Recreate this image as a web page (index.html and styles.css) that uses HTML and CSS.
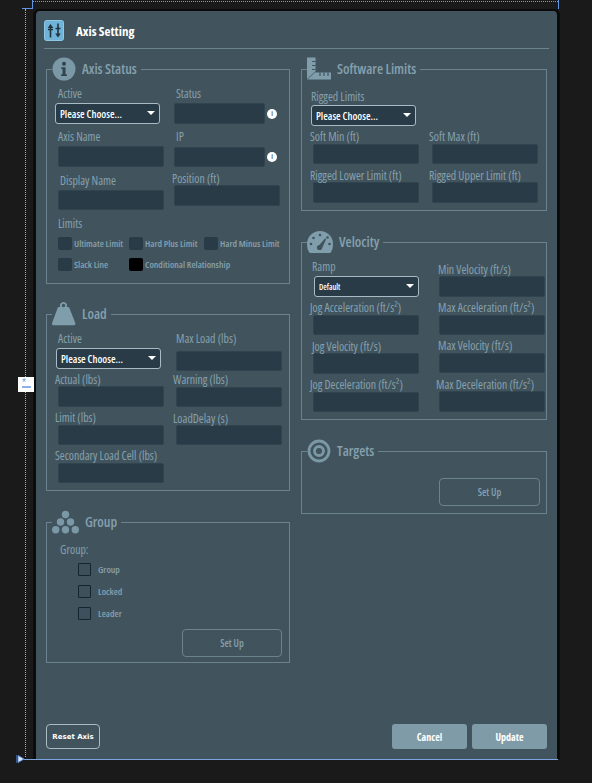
FILE: index.html
```html
<!DOCTYPE html>
<html lang="en">

<head>
    <meta charset="UTF-8">
    <meta name="viewport" content="width=device-width, initial-scale=1.0">
    <title>Axis Setting</title>
    <link rel="stylesheet" href="styles.css">
</head>

<body>

    <!-- Designer guides that lie over the page -->
    <div class="guide guide-dots-top"></div>
    <div class="guide guide-dots-left"></div>
    <div class="guide guide-corner-h"></div>
    <div class="guide guide-corner-v"></div>
    <div class="guide guide-right-v"></div>
    <div class="guide guide-bottom"></div>
    <svg class="guide guide-arrow" width="8" height="8" viewBox="0 0 8 8"><path d="M0 0v8M2 0.500v7L8 4z" fill="#dfe9fb" stroke="#5f93e6"/></svg>
    <div class="guide guide-tab"><span class="tab-star">*</span><span class="tab-bar"></span></div>

    <div class="panel">
        <header class="panel-head">
            <svg class="head-icon" width="20" height="21" viewBox="0 0 20 21">
                <rect x="0.500" y="0.500" width="19" height="20" rx="2" fill="#6fb3d8" stroke="#8fc8e6"/>
                <path d="M6.500 7v10.500M4 9.500h5M14 3.500V14M11.500 8.500h5" fill="none" stroke="#22343f" stroke-width="1.600"/>
                <path d="M6.500 4 9.300 8H3.700zM14 17.500 11.200 13.500h5.600z" fill="#22343f"/>
            </svg>
            <h1>Axis Setting</h1>
        </header>

        <div class="columns">
            <div class="column">

                <fieldset class="box box-status">
                    <legend class="box-title">
                        <svg width="24" height="24" viewBox="0 0 24 24">
                            <circle cx="12" cy="12" r="11.500" fill="#7b98a6"/>
                            <circle cx="12" cy="6.800" r="2" fill="#2f444f"/>
                            <path d="M9.300 10.200h4.200v7h1.400v1.800H9.200v-1.800h1.400v-5.200H9.300z" fill="#2f444f"/>
                        </svg>
                        <span>Axis Status</span>
                    </legend>
                    <div class="grid grid-status">
                        <div class="field">
                            <label class="in-3">Active</label>
                            <div class="select-wrap"><select class="select"><option>Please Choose...</option></select></div>
                        </div>
                        <div class="field">
                            <label class="in-4">Status</label>
                            <div class="with-info in-2">
                                <input class="input input-short" type="text">
                                <span class="info">i</span>
                            </div>
                        </div>
                        <div class="field">
                            <label class="in-3">Axis Name</label>
                            <input class="input in-3" type="text">
                        </div>
                        <div class="field">
                            <label class="in-4 gap-4">IP</label>
                            <div class="with-info in-2">
                                <input class="input input-short input-low" type="text">
                                <span class="info">i</span>
                            </div>
                        </div>
                        <div class="field down-2">
                            <label class="in-5">Display Name</label>
                            <input class="input input-low in-3" type="text">
                        </div>
                        <div class="field">
                            <label class="gap-0">Position (ft)</label>
                            <input class="input in-2" type="text">
                        </div>
                        <div class="limits">
                            <label class="in-3">Limits</label>
                            <div class="limit-row">
                                <div class="limit limit-a"><input class="limit-box" type="checkbox"><span>Ultimate Limit</span></div>
                                <div class="limit limit-b"><input class="limit-box" type="checkbox"><span>Hard Plus Limit</span></div>
                                <div class="limit"><input class="limit-box" type="checkbox"><span>Hard Minus Limit</span></div>
                            </div>
                            <div class="limit-row">
                                <div class="limit limit-a"><input class="limit-box" type="checkbox"><span>Slack Line</span></div>
                                <div class="limit"><input class="limit-box limit-black" type="checkbox"><span>Conditional Relationship</span></div>
                            </div>
                        </div>
                    </div>
                </fieldset>

                <fieldset class="box box-load">
                    <legend class="box-title">
                        <svg width="24" height="24" viewBox="0 0 24 24">
                            <path d="M11.500 0a3.500 3.500 0 0 1 3.200 5H16c.7 0 1.200.4 1.400 1L23.300 21c.4 1.300-.2 2.300-1.600 2.300H1.700C.3 23.300-.3 22.300.1 21L5.600 6c.2-.6.700-1 1.400-1h1.300A3.500 3.500 0 0 1 11.500 0zm0 1.800a1.700 1.700 0 0 0 0 3.400 1.700 1.700 0 0 0 0-3.400z" fill="#7f9dab"/>
                        </svg>
                        <span>Load</span>
                    </legend>
                    <div class="grid grid-load">
                        <div class="field">
                            <label class="in-3">Active</label>
                            <div class="select-wrap in-1"><select class="select"><option>Please Choose...</option></select></div>
                        </div>
                        <div class="field">
                            <label class="in-3 gap-6">Max Load (lbs)</label>
                            <input class="input input-low in-3" type="text">
                        </div>
                        <div class="field">
                            <label class="gap-0">Actual (lbs)</label>
                            <input class="input in-3" type="text">
                        </div>
                        <div class="field">
                            <label class="gap-1">Warning (lbs)</label>
                            <input class="input input-low in-3" type="text">
                        </div>
                        <div class="field">
                            <label class="gap-1">Limit (lbs)</label>
                            <input class="input input-low in-3" type="text">
                        </div>
                        <div class="field down-1">
                            <label class="gap-0">LoadDelay (s)</label>
                            <input class="input input-low in-3" type="text">
                        </div>
                        <div class="field field-wide">
                            <label class="gap-1">Secondary Load Cell (lbs)</label>
                            <input class="input input-low in-3" type="text">
                        </div>
                    </div>
                </fieldset>

                <fieldset class="box box-group">
                    <legend class="box-title">
                        <svg width="27" height="24" viewBox="0 0 27 24">
                            <circle cx="13.500" cy="4.500" r="3.700" fill="#7b98a6"/>
                            <circle cx="8.500" cy="12" r="3.700" fill="#7b98a6"/>
                            <circle cx="18.500" cy="12" r="3.700" fill="#7b98a6"/>
                            <circle cx="3.700" cy="19.800" r="3.700" fill="#7b98a6"/>
                            <circle cx="13.500" cy="19.800" r="3.700" fill="#7b98a6"/>
                            <circle cx="23.300" cy="19.800" r="3.700" fill="#7b98a6"/>
                        </svg>
                        <span>Group</span>
                    </legend>
                    <div class="group-body">
                        <label class="group-label">Group:</label>
                        <div class="check"><input class="check-box" type="checkbox"><span>Group</span></div>
                        <div class="check"><input class="check-box" type="checkbox"><span>Locked</span></div>
                        <div class="check"><input class="check-box" type="checkbox"><span>Leader</span></div>
                        <button class="setup setup-group" type="button">Set Up</button>
                    </div>
                </fieldset>

            </div>

            <div class="column">

                <fieldset class="box box-limits">
                    <legend class="box-title">
                        <svg width="24" height="24" viewBox="0 0 24 24">
                            <path d="M0 0.500H8.500V15.500H24V22.500H0z" fill="#7f9dab"/>
                            <path d="M0 22.500 8.500 14.500" stroke="#41545e" stroke-width="0.800" fill="none"/>
                            <path d="M8.500 4.500H5M8.500 8.500H5M8.500 12.500H5M13 15.500V19M17 15.500V19M21 15.500V19" stroke="#41545e" stroke-width="1.200" fill="none"/>
                        </svg>
                        <span>Software Limits</span>
                    </legend>
                    <div class="grid grid-limits">
                        <div class="field field-wide">
                            <label class="in-1 gap-2">Rigged Limits</label>
                            <div class="select-wrap in-1"><select class="select"><option>Please Choose...</option></select></div>
                        </div>
                        <div class="field">
                            <label class="gap-1">Soft Min (ft)</label>
                            <input class="input input-low in-3" type="text">
                        </div>
                        <div class="field">
                            <label class="gap-1">Soft Max (ft)</label>
                            <input class="input input-low in-3" type="text">
                        </div>
                        <div class="field">
                            <label class="gap-0">Rigged Lower Limit (ft)</label>
                            <input class="input in-3" type="text">
                        </div>
                        <div class="field">
                            <label class="gap-0">Rigged Upper Limit (ft)</label>
                            <input class="input in-3" type="text">
                        </div>
                    </div>
                </fieldset>

                <fieldset class="box box-velocity">
                    <legend class="box-title">
                        <svg width="26" height="24" viewBox="0 0 26 24">
                            <path d="M13 1C6 1 0 6.500 0 14c0 3 .6 5.500 1.700 7.500.6 1 1.300 1.500 2.300 1.500h18c1 0 1.700-.5 2.300-1.500C25.400 19.500 26 17 26 14 26 6.500 20 1 13 1z" fill="#7f9dab"/>
                            <g fill="#41545e">
                                <circle cx="13" cy="5" r="1.300"/>
                                <circle cx="6.500" cy="8" r="1.300"/>
                                <circle cx="4" cy="14" r="1.300"/>
                                <circle cx="20.500" cy="7.500" r="1.300"/>
                                <circle cx="22.500" cy="14" r="1.300"/>
                                <circle cx="12.500" cy="17.500" r="2.600"/>
                                <path d="M11 16.500 18 8.500l1.200.6-4.500 10z"/>
                            </g>
                        </svg>
                        <span>Velocity</span>
                    </legend>
                    <div class="grid grid-velocity">
                        <div class="field">
                            <label class="in-2">Ramp</label>
                            <div class="select-wrap in-4"><select class="select select-small"><option>Default</option></select></div>
                        </div>
                        <div class="field down-3">
                            <label class="in-2 gap-0">Min Velocity (ft/s)</label>
                            <input class="input in-3" type="text">
                        </div>
                        <div class="field">
                            <label class="gap-1">Jog Acceleration (ft/s&sup2;)</label>
                            <input class="input input-low in-3" type="text">
                        </div>
                        <div class="field">
                            <label class="in-2 gap-1">Max Acceleration (ft/s&sup2;)</label>
                            <input class="input input-low in-3" type="text">
                        </div>
                        <div class="field">
                            <label class="in-2 gap-0">Jog Velocity (ft/s)</label>
                            <input class="input in-3" type="text">
                        </div>
                        <div class="field up-1">
                            <label class="in-2 gap-1">Max Velocity (ft/s)</label>
                            <input class="input input-low in-3" type="text">
                        </div>
                        <div class="field">
                            <label class="gap-1">Jog Deceleration (ft/s&sup2;)</label>
                            <input class="input input-low in-3" type="text">
                        </div>
                        <div class="field">
                            <label class="gap-0">Max Deceleration (ft/s&sup2;)</label>
                            <input class="input in-3" type="text">
                        </div>
                    </div>
                </fieldset>

                <fieldset class="box box-targets">
                    <legend class="box-title">
                        <svg width="24" height="24" viewBox="0 0 24 24">
                            <circle cx="12" cy="12" r="10" fill="none" stroke="#7b98a6" stroke-width="2.800"/>
                            <circle cx="12" cy="12" r="4.500" fill="none" stroke="#7b98a6" stroke-width="2.800"/>
                        </svg>
                        <span>Targets</span>
                    </legend>
                    <button class="setup setup-targets" type="button">Set Up</button>
                </fieldset>

            </div>
        </div>

        <footer class="panel-foot">
            <button class="btn-reset" type="button">Reset Axis</button>
            <div class="foot-right">
                <button class="btn-main" type="button">Cancel</button>
                <button class="btn-main" type="button">Update</button>
            </div>
        </footer>
    </div>

</body>

</html>
```

FILE: styles.css
```css
* {
    box-sizing: border-box;
}

body {
    margin: 0;
    height: 783px;
    overflow: hidden;
    position: relative;
    background-color: #1a1a1a;
    font-family: 'Open Sans', 'Liberation Sans', sans-serif;
    font-stretch: 75%;
    color: #86a0ad;
}

/* guides */
.guide {
    position: absolute;
}

.guide-dots-top {
    left: 33px;
    top: 1px;
    width: 525px;
    border-top: 1px dotted #6f9be6;
}

.guide-dots-left {
    left: 25px;
    top: 9px;
    height: 748px;
    border-left: 1px dotted #8fb0ea;
}

.guide-corner-h {
    left: 22px;
    top: 8px;
    width: 11px;
    border-top: 1px solid #5f93e6;
}

.guide-corner-v {
    left: 32px;
    top: 0;
    height: 9px;
    border-left: 1px solid #5f93e6;
}

.guide-right-v {
    left: 558px;
    top: 0;
    height: 9px;
    border-left: 1px solid #5f93e6;
}

.guide-bottom {
    left: 24px;
    top: 759px;
    width: 534px;
    border-top: 1px solid #7ba3e0;
}

.guide-arrow {
    left: 16px;
    top: 755px;
}

.guide-tab {
    left: 18px;
    top: 377px;
    width: 16px;
    height: 15px;
    background-color: #fff;
    z-index: 2;
}

.tab-star {
    position: absolute;
    left: 4px;
    top: 0;
    font: 10px 'Liberation Sans', sans-serif;
    color: #6f9be6;
}

.tab-bar {
    position: absolute;
    left: 4px;
    top: 9px;
    width: 9px;
    height: 2px;
    background-color: #8fb0ea;
}

/* panel */
.panel {
    position: absolute;
    left: 33px;
    top: 9px;
    width: 527px;
    height: 750px;
    display: flex;
    flex-direction: column;
    background-color: #41545e;
    background-clip: padding-box;
    border: solid #0b0b0b;
    border-width: 2px 3px 0;
    border-radius: 6px 6px 0 0;
}

.panel-head {
    display: flex;
    align-items: center;
    gap: 12px;
    height: 38px;
    margin: 0 8px;
    padding: 9px 0 7px;
    border-bottom: 1px solid #6b838e;
}

.head-icon {
    flex: none;
}

h1 {
    margin: 0;
    font-size: 13px;
    font-weight: bold;
    color: #fff;
}

.columns {
    display: flex;
    gap: 11px;
    margin: 8px 10px 0;
}

.column {
    display: flex;
    flex-direction: column;
    gap: 19px;
}

.column:first-child {
    width: 244px;
}

.column:last-child {
    width: 246px;
}

/* boxes */
.box {
    margin: 0;
    padding: 0 0 0 8px;
    min-width: 0;
    border: 1px solid #6b838e;
}

.box-status {
    height: 227px;
}

.box-load {
    height: 189px;
    margin-top: -1px;
}

.box-group {
    height: 153px;
}

.box-limits {
    height: 154px;
}

.box-velocity {
    height: 190px;
}

.box-targets {
    height: 75px;
}

.box-title {
    display: flex;
    align-items: center;
    height: 24px;
    padding: 0 4px 0 0;
    margin-left: -3px;
    font-size: 14px;
    font-weight: 600;
    color: #86a0ad;
}

.box-title span {
    margin-top: -2px;
}

.box-title svg {
    flex: none;
    margin-right: 6px;
}

.grid {
    display: grid;
}

.grid-status {
    grid-template-columns: 117px 1fr;
    grid-template-rows: 43px 42px 45px auto;
    padding-top: 5px;
}

.grid-load {
    grid-template-columns: 118px 1fr;
    grid-template-rows: 41px 38px 38px auto;
    padding-top: 5px;
}

.grid-limits {
    grid-template-columns: 119px 1fr;
    grid-template-rows: 40px 39px auto;
    padding-top: 8px;
}

.grid-velocity {
    grid-template-columns: 126px 1fr;
    grid-template-rows: 41px 39px 38px auto;
    padding-top: 5px;
}

.field {
    display: block;
}

.field-wide,
.limits {
    grid-column: 1 / -1;
}

label {
    display: block;
    height: 14px;
    margin-bottom: 3px;
    font-size: 11.8px;
    line-height: 15px;
    white-space: nowrap;
}

/* small nudges, the form was laid out by hand */
.in-1 { margin-left: 1px; }
.in-2 { margin-left: 2px; }
.in-3 { margin-left: 3px; }
.in-4 { margin-left: 4px; }
.in-5 { margin-left: 5px; }

label.gap-0 { margin-bottom: 0; }
label.gap-1 { margin-bottom: 1px; }
label.gap-2 { margin-bottom: 2px; }
label.gap-4 { margin-bottom: 4px; }
label.gap-6 { margin-bottom: 6px; }

.down-1 { margin-top: 1px; }
.down-2 { margin-top: 2px; }
.down-3 { margin-top: 3px; }
.up-1 { margin-top: -1px; }

.input {
    display: block;
    width: 106px;
    height: 21px;
    padding: 0 4px;
    background-color: #283b47;
    border: 1px solid #2f444f;
    border-radius: 2px;
    outline: none;
}

.input-short {
    width: 91px;
}

.input-low {
    height: 20px;
}

.with-info {
    display: flex;
    align-items: center;
    gap: 2px;
}

.info {
    width: 10px;
    height: 10px;
    border-radius: 50%;
    background-color: #fff;
    color: #6d8794;
    font: bold 8px/10px 'Liberation Sans', sans-serif;
    text-align: center;
}

.select-wrap {
    position: relative;
    width: 105px;
    height: 21px;
}

.select-wrap::after {
    content: '';
    position: absolute;
    right: 5px;
    top: 8px;
    border-style: solid;
    border-width: 4px 4px 0;
    border-color: #fff transparent transparent;
}

.select {
    display: block;
    width: 100%;
    height: 100%;
    padding: 0 0 0 4px;
    appearance: none;
    background-color: #283b47;
    border: 1px solid #a9bcc6;
    border-radius: 3px;
    color: #fff;
    font-family: inherit;
    font-stretch: inherit;
    font-size: 10.5px;
    font-weight: 600;
    outline: none;
}

.select-small {
    font-size: 8px;
}

/* limits */
.limits label {
    margin-bottom: 7px;
}

.limit-row {
    display: flex;
    height: 21px;
    margin-left: 3px;
}

.limit {
    display: flex;
    align-items: flex-start;
    gap: 2px;
    font-size: 9.5px;
    font-weight: 600;
    line-height: 14px;
    white-space: nowrap;
}

.limit-a {
    width: 71px;
}

.limit-b {
    width: 75px;
}

.limit-box {
    flex: none;
    width: 14px;
    height: 13px;
    margin: 0;
    appearance: none;
    background-color: #283b47;
    border-radius: 2px;
}

.limit-black {
    background-color: #000;
}

/* group */
.group-body {
    padding-top: 8px;
}

.group-label {
    margin-left: 5px;
    margin-bottom: 7px;
}

.check {
    display: flex;
    align-items: center;
    gap: 7px;
    height: 13px;
    margin: 0 0 9px 23px;
    font-size: 9.5px;
    font-weight: 600;
}

.check-box {
    flex: none;
    width: 13px;
    height: 13px;
    margin: 0;
    appearance: none;
    background-color: #3d505b;
    border: 1px solid #16242f;
    border-radius: 1px;
}

.setup {
    display: block;
    height: 28px;
    background: none;
    border: 1px solid #6b838e;
    border-radius: 4px;
    color: #86a0ad;
    font-family: inherit;
    font-stretch: inherit;
    font-size: 10px;
    font-weight: 600;
}

.setup-group {
    width: 100px;
    margin: 6px 0 0 127px;
}

.setup-targets {
    width: 101px;
    margin: 15px 0 0 129px;
}

/* footer */
.panel-foot {
    display: flex;
    justify-content: space-between;
    margin-top: auto;
    padding: 0 10px 10px;
}

.foot-right {
    display: flex;
    gap: 5px;
}

.btn-reset {
    width: 54px;
    height: 25px;
    padding: 0;
    background: none;
    border: 1px solid #a9bcc6;
    border-radius: 4px;
    color: #fff;
    font-family: 'DejaVu Sans', sans-serif;
    font-stretch: normal;
    font-size: 7px;
    font-weight: bold;
}

.btn-main {
    width: 75px;
    height: 25px;
    padding: 0;
    background-color: #7f9ba7;
    border: none;
    border-radius: 3px;
    color: #fff;
    font-family: inherit;
    font-stretch: inherit;
    font-size: 10px;
    font-weight: 700;
}
```
